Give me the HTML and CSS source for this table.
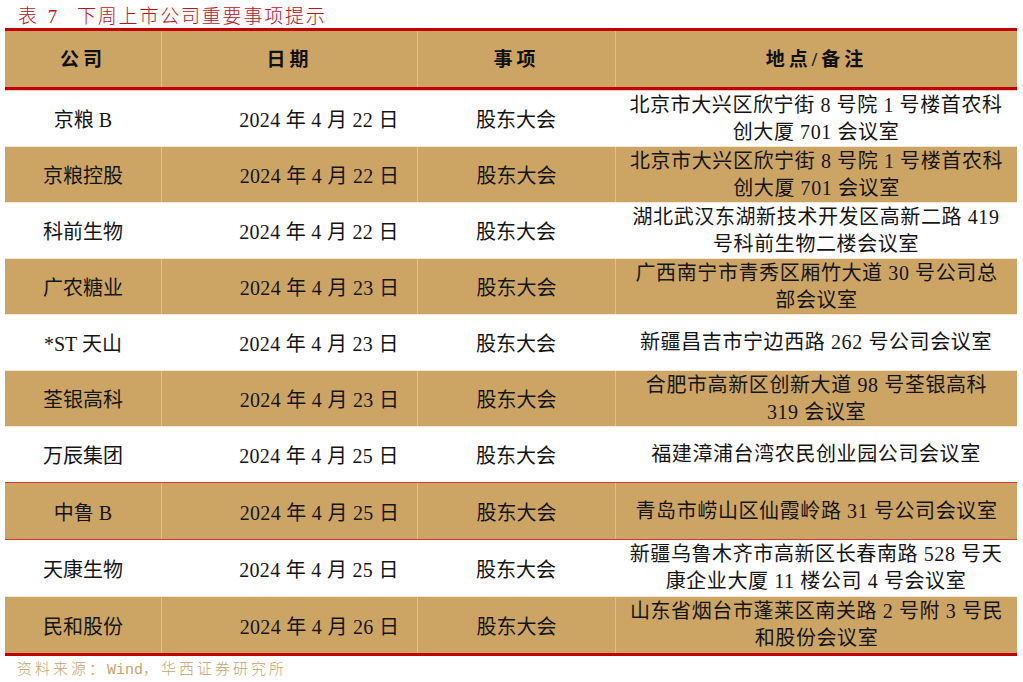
FILE: index.html
```html
<!DOCTYPE html>
<html lang="zh">
<head>
<meta charset="utf-8">
<link rel="stylesheet" href="styles.css">
</head>
<body>
<div class="page">
  <div class="title"><span class="tno">表 7</span><span class="ttext">下周上市公司重要事项提示</span></div>
  <div class="table">
    <div class="row head">
      <div class="cell">公司</div>
      <div class="cell">日期</div>
      <div class="cell">事项</div>
      <div class="cell">地点/备注</div>
    </div>
    <div class="row">
      <div class="cell">京粮 B</div>
      <div class="cell date">2024 年 4 月 22 日</div>
      <div class="cell">股东大会</div>
      <div class="cell addr">北京市大兴区欣宁街 8 号院 1 号楼首农科<br>创大厦 701 会议室</div>
    </div>
    <div class="row tan">
      <div class="cell">京粮控股</div>
      <div class="cell date">2024 年 4 月 22 日</div>
      <div class="cell">股东大会</div>
      <div class="cell addr">北京市大兴区欣宁街 8 号院 1 号楼首农科<br>创大厦 701 会议室</div>
    </div>
    <div class="row">
      <div class="cell">科前生物</div>
      <div class="cell date">2024 年 4 月 22 日</div>
      <div class="cell">股东大会</div>
      <div class="cell addr">湖北武汉东湖新技术开发区高新二路 419<br>号科前生物二楼会议室</div>
    </div>
    <div class="row tan">
      <div class="cell">广农糖业</div>
      <div class="cell date">2024 年 4 月 23 日</div>
      <div class="cell">股东大会</div>
      <div class="cell addr">广西南宁市青秀区厢竹大道 30 号公司总<br>部会议室</div>
    </div>
    <div class="row">
      <div class="cell">*ST 天山</div>
      <div class="cell date">2024 年 4 月 23 日</div>
      <div class="cell">股东大会</div>
      <div class="cell addr">新疆昌吉市宁边西路 262 号公司会议室</div>
    </div>
    <div class="row tan">
      <div class="cell">荃银高科</div>
      <div class="cell date">2024 年 4 月 23 日</div>
      <div class="cell">股东大会</div>
      <div class="cell addr">合肥市高新区创新大道 98 号荃银高科<br>319 会议室</div>
    </div>
    <div class="row">
      <div class="cell">万辰集团</div>
      <div class="cell date">2024 年 4 月 25 日</div>
      <div class="cell">股东大会</div>
      <div class="cell addr">福建漳浦台湾农民创业园公司会议室</div>
    </div>
    <div class="row tan boxed">
      <div class="cell">中鲁 B</div>
      <div class="cell date">2024 年 4 月 25 日</div>
      <div class="cell">股东大会</div>
      <div class="cell addr">青岛市崂山区仙霞岭路 31 号公司会议室</div>
    </div>
    <div class="row">
      <div class="cell">天康生物</div>
      <div class="cell date">2024 年 4 月 25 日</div>
      <div class="cell">股东大会</div>
      <div class="cell addr">新疆乌鲁木齐市高新区长春南路 528 号天<br>康企业大厦 11 楼公司 4 号会议室</div>
    </div>
    <div class="row tan last">
      <div class="cell">民和股份</div>
      <div class="cell date">2024 年 4 月 26 日</div>
      <div class="cell">股东大会</div>
      <div class="cell addr">山东省烟台市蓬莱区南关路 2 号附 3 号民<br>和股份会议室</div>
    </div>
  </div>
  <div class="source">资料来源：<span class="mono">Wind</span>，华西证券研究所</div>
</div>
</body>
</html>
```

FILE: styles.css
```css
html, body {
  margin: 0;
  padding: 0;
  background: #ffffff;
}

.page {
  width: 1023px;
  height: 682px;
  padding-left: 5px;
  box-sizing: border-box;
  font-family: "Liberation Serif", "Noto Sans CJK SC", serif;
  color: #151515;
}

.title {
  height: 28px;
  padding-left: 13px;
  display: flex;
  align-items: center;
  color: #c0121b;
  font-size: 19px;
  letter-spacing: 1.8px;
  font-family: "Liberation Serif", "Noto Sans CJK SC", serif;
  font-weight: 300;
}

.tno {
  width: 59px;
  letter-spacing: 3px;
}

.table {
  width: 1012px;
  display: flex;
  flex-direction: column;
}

.row {
  display: grid;
  grid-template-columns: 156px 256px 198px 402px;
  height: 56px;
  box-sizing: border-box;
  font-size: 20px;
  border-top: 1px solid #f3e8d6;
}

.row.tan {
  background: #cca565;
}

.row.tan .cell + .cell {
  border-left: 1px solid #dcc08e;
}

.row.head {
  height: 62px;
  background: #cca565;
  border-top: 3px solid #c00000;
  border-bottom: 3px solid #c00000;
  font-weight: 700;
  font-size: 19px;
  letter-spacing: 4px;
  color: #111;
}

.row.head .cell + .cell {
  border-left: 1px solid #dcc08e;
}

.row.head .cell {
  padding-bottom: 3px;
}

.row.head + .row {
  border-top: 1px solid #f4c0c0;
}

.row.boxed {
  height: 58px;
  border-top: 1px solid #d23a3a;
  border-bottom: 1px solid #d23a3a;
}

.row.boxed + .row {
  border-top: none;
}

.row.last {
  height: 60px;
  border-bottom: 3px solid #c00000;
}

.cell {
  display: flex;
  align-items: center;
  justify-content: center;
  text-align: center;
  white-space: nowrap;
  font-weight: inherit;
}

.cell.date {
  padding-left: 60px;
  letter-spacing: 0.3px;
}

.cell.addr {
  line-height: 27px;
  letter-spacing: 0.6px;
}

.head .cell {
  font-weight: 700;
}

.source {
  padding-left: 12px;
  margin-top: 1px;
  font-size: 15px;
  letter-spacing: 3px;
  color: #c9a46c;
  font-family: "Liberation Serif", "Noto Sans CJK SC", serif;
  font-weight: 300;
}

.mono {
  font-family: "Liberation Mono", monospace;
  letter-spacing: 0;
}
```
